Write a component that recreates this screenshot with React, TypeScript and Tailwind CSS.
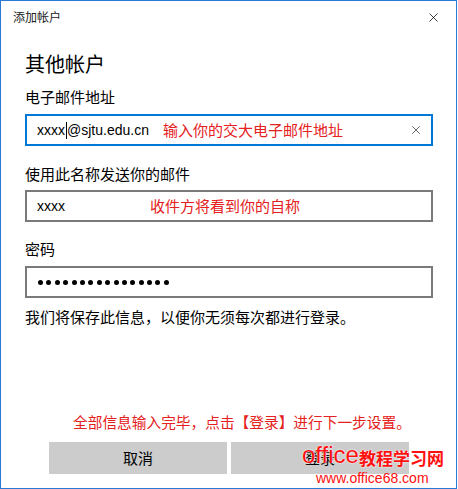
import { X } from 'lucide-react';

const cjk = "font-['Noto_Sans_CJK_SC',sans-serif]";
const latin = "font-['Liberation_Sans','Noto_Sans_CJK_SC',sans-serif]";

export default function App() {
  const dots = Array.from({ length: 16 });

  return (
    <div className={`relative w-[457px] h-[489px] bg-white border border-[#2b79d6] text-black ${cjk}`}>
      {/* Title bar */}
      <div className="flex h-[32px] items-center justify-between pl-[12px] pr-[15px]">
        <span className="text-[12px] leading-none text-[#222]">添加帐户</span>
        <X className="w-[15px] h-[15px] text-black" strokeWidth={1.2} />
      </div>

      <div className="px-[24px]">
        <h1 className="mt-[17px] text-[20px] leading-[28px] font-normal">其他帐户</h1>

        <div className="mt-[9px] text-[15px] leading-[20px]">电子邮件地址</div>
        <div className="mt-[7px] flex h-[32px] w-[408px] items-center border-2 border-[#0078d7] pl-[10px] pr-[8px]">
          <span className={`${latin} text-[14px] flex items-center`}>
            xxxx<span className="mx-[0.5px] inline-block h-[17px] w-px bg-black" />@sjtu.edu.cn
          </span>
          <span className="ml-[14px] text-[15px] text-[#e52020]">输入你的交大电子邮件地址</span>
          <X className="ml-auto w-[14px] h-[14px] text-[#555]" strokeWidth={1.5} />
        </div>

        <div className="mt-[18px] text-[15px] leading-[20px]">使用此名称发送你的邮件</div>
        <div className="mt-[6px] flex h-[32px] w-[408px] items-center border-2 border-[#7a7a7a] pl-[10px]">
          <span className={`${latin} text-[14px]`}>xxxx</span>
          <span className="ml-[85px] text-[15px] text-[#e52020]">收件方将看到你的自称</span>
        </div>

        <div className="mt-[17px] text-[15px] leading-[20px]">密码</div>
        <div className="mt-[7px] flex h-[32px] w-[408px] items-center gap-[3.4px] border-2 border-[#7a7a7a] pl-[11px]">
          {dots.map((_, i) => (
            <span key={i} className="inline-block h-[5px] w-[5px] rounded-full bg-black" />
          ))}
        </div>

        <div className="mt-[9px] text-[15px] leading-[20px]">我们将保存此信息，以便你无须每次都进行登录。</div>

        <div className="mt-[85px] pl-[48px] text-[14.7px] leading-[20px] text-[#e52020]">
          全部信息输入完毕，点击【登录】进行下一步设置。
        </div>

        <div className="mt-[10px] flex gap-[4px] pl-[24px]">
          <button className="h-[32px] w-[178px] bg-[#cccccc] text-[15px]">取消</button>
          <button className="h-[32px] w-[178px] bg-[#cccccc] text-[15px]">登录</button>
        </div>
      </div>

      {/* watermark */}
      <div className="absolute left-[301px] top-[442px] flex flex-col text-[#ff1010]">
        <div className="flex items-end leading-none [text-shadow:0_0_2px_#fff,0_0_1px_#fff]">
          <span className={`${latin} text-[24px]`}>office</span>
          <span className="mb-[1px] text-[17px] font-bold">教程学习网</span>
        </div>
        <span className={`${latin} ml-[14px] mt-[4px] text-[14px] leading-none`}>www.office68.com</span>
      </div>
    </div>
  );
}
